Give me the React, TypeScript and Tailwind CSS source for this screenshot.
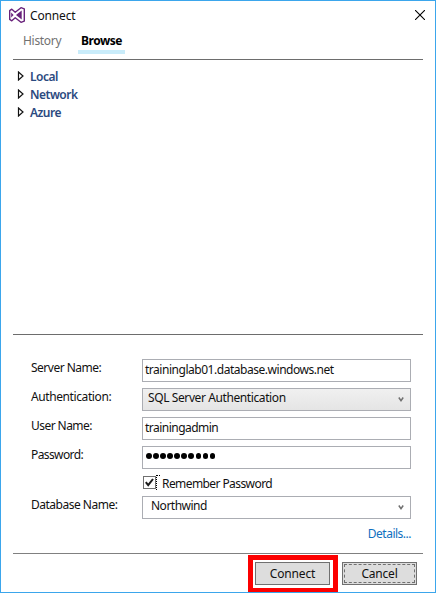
import type { ReactNode } from 'react';

const label = 'mt-px h-4 whitespace-nowrap leading-4';
const box = 'flex h-[23px] w-[269px] border border-[#abadb3]';

function Chevron() {
  return (
    <svg className="mr-[6px] mt-[8px] h-[6px] w-[6px]" viewBox="0 0 6 6" fill="none">
      <path d="M.8 .5 3 3.7 5.2 .5" stroke="#707070" strokeWidth="1.5" />
    </svg>
  );
}

function TreeItem({ children }: { children: ReactNode }) {
  return (
    <li className="flex h-[18px] items-start">
      <svg className="mt-[2px] h-[10px] w-[7px]" viewBox="0 0 7 10">
        <path d="M1.5 1v8L6 5z" fill="#fff" stroke="#111" strokeWidth="1.2" />
      </svg>
      <span className="ml-[6px] h-4 font-semibold leading-4 text-[#2b4a80] tracking-[-0.5px]">{children}</span>
    </li>
  );
}

function Row({ name, children }: { name: ReactNode; children: ReactNode }) {
  return (
    <div className="flex h-[23px]">
      <div className="w-[111px] shrink-0">{name}</div>
      {children}
    </div>
  );
}

export default function App() {
  return (
    <div className="flex h-[593px] w-[436px] flex-col overflow-hidden border border-[#3ba6ec] bg-white font-['Noto_Sans',sans-serif] text-[12px] text-[#111]">
      <header className="flex h-[30px] shrink-0 items-start pl-[8px] pr-[10px]">
        <svg className="mt-[6px] h-[16px] w-[16px]" viewBox="0 0 16 16">
          <path
            d="M.7 3.6 2.8 2.2 6.2 5.2 12 .7l3.3 1.2v12.2L12 15.3 6.2 10.8 2.8 13.8.7 12.4z"
            fill="#fff"
            stroke="#68217a"
            strokeWidth="1.4"
            strokeLinejoin="round"
          />
          <path d="M12.7 3.6v8.8L7 8z" fill="#68217a" />
          <path d="M2.2 5.6v4.8L4.6 8z" fill="#68217a" />
        </svg>
        <h1 className="ml-[5px] mt-[7px] h-4 leading-4 tracking-[-0.15px]">Connect</h1>
        <svg className="ml-auto mt-[9px] h-[10px] w-[10px]" viewBox="0 0 10 10">
          <path d="M0 0 10 10M10 0 0 10" stroke="#000" strokeWidth="1.1" />
        </svg>
      </header>
      <nav className="flex h-[28px] shrink-0 pl-[22px]">
        <span className="mt-[2px] h-4 leading-4 text-[#717171] tracking-[-0.3px]">History</span>
        <span className="ml-auto mr-[310px] flex h-[23px] w-[47px] flex-col items-center border-b-4 border-[#c9ecfa] pt-[2px] font-bold leading-4 text-black tracking-[-0.5px]">
          Browse
        </span>
      </nav>
      <ul className="mx-[12px] h-[276px] shrink-0 border-y border-[#6d6d6d] pl-[4px] pt-[9px]">
        <TreeItem>Local</TreeItem>
        <TreeItem>Network</TreeItem>
        <TreeItem>Azure</TreeItem>
      </ul>
      <form className="mx-[12px] flex h-[219px] shrink-0 flex-col border-b border-[#808080] pl-[18px] pt-[24px]">
        <div className="flex flex-col gap-[6px]">
          <Row name={<div className={label + ' tracking-[-0.5px]'}>Server Name:</div>}>
            <div className={box + ' pl-[2px] pt-px leading-[18px] tracking-[-0.47px]'}>traininglab01.database.windows.net</div>
          </Row>
          <Row name={<div className={label + ' tracking-[-0.4px]'}>Authentication:</div>}>
            <div className={box + ' justify-between bg-gradient-to-b from-[#f0f0f0] to-[#e5e5e5] pl-[5px] leading-[17px] tracking-[-0.4px]'}>
              SQL Server Authentication
              <Chevron />
            </div>
          </Row>
          <Row name={<div className={label + ' tracking-[-0.55px]'}>User Name:</div>}>
            <div className={box + ' pl-[2px] pt-px leading-[18px] tracking-[-0.52px]'}>trainingadmin</div>
          </Row>
          <Row name={<div className={label + ' tracking-[-0.6px]'}>Password:</div>}>
            <div className={box + ' gap-[1.4px] pl-[3px] pt-[6px]'}>
              {Array.from({ length: 10 }, (_, i) => (
                <span key={i} className="h-[5.7px] w-[5.7px] rounded-full bg-black" />
              ))}
            </div>
          </Row>
        </div>
        <div className="ml-[112px] mt-[7px] flex h-[20px] items-start">
          <span className="h-[13px] w-[13px] border border-[#707070]">
            <svg className="h-[11px] w-[11px]" viewBox="0 0 11 11">
              <path d="m1.8 5.2 2.4 3L9 2" fill="none" stroke="#1c1c1c" strokeWidth="2" />
            </svg>
          </span>
          <span className="-mt-px h-[15px] w-[4px] border-l border-t border-dotted border-black" />
          <span className="ml-[2px] h-4 leading-4 tracking-[-0.58px]">Remember Password</span>
        </div>
        <Row name={<div className={label + ' tracking-[-0.5px]'}>Database Name:</div>}>
          <div className={box + ' justify-between pl-[8px] leading-[18px] tracking-[-0.5px]'}>
            Northwind
            <Chevron />
          </div>
        </Row>
        <a className="mr-[12px] mt-[7px] h-4 self-end leading-4 text-[#0e70c0] tracking-[-0.5px]">Details...</a>
      </form>
      <footer className="flex h-[38px] shrink-0 items-start pl-[247px] pt-[1px]">
        <div className="h-[38px] w-[90px] shrink-0 border-[5px] border-[#fc0000] bg-white pl-[2px] pt-[2px]">
          <button className="flex h-[23px] w-[75px] items-center justify-center border border-[#707070] bg-[#ddd] tracking-[-0.15px]">
            Connect
          </button>
        </div>
        <button className="ml-[4px] mt-[7px] flex h-[23px] w-[75px] shrink-0 border border-[#707070] bg-[#ddd] p-px tracking-[-0.2px]">
          <span className="flex h-full w-full items-center justify-center border border-dashed border-[#707070]">Cancel</span>
        </button>
      </footer>
    </div>
  );
}
